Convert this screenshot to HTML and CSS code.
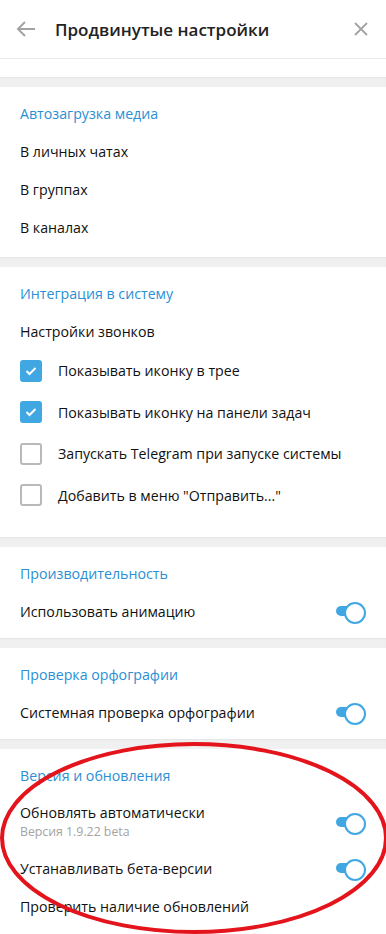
FILE: index.html
```html
<!DOCTYPE html>
<html lang="ru">
<head>
<meta charset="utf-8">
<link rel="stylesheet" href="styles.css">
</head>
<body>
<div class="page">
  <header class="header">
    <button class="icon-btn back" aria-label="Назад">
      <svg width="20" height="16" viewBox="0 0 20 16"><path d="M9 1 L2 8 L9 15 M2 8 H19" fill="none" stroke="#a3a3a3" stroke-width="2"/></svg>
    </button>
    <h1 class="title">Продвинутые настройки</h1>
    <button class="icon-btn close" aria-label="Закрыть">
      <svg width="14" height="14" viewBox="0 0 14 14"><path d="M1 1 L13 13 M13 1 L1 13" fill="none" stroke="#a3a3a3" stroke-width="1.8"/></svg>
    </button>
  </header>
  <div class="top-space"></div>
  <div class="divider"></div>

  <section class="section s-media">
    <div class="sec-title">Автозагрузка медиа</div>
    <div class="row">В личных чатах</div>
    <div class="row">В группах</div>
    <div class="row">В каналах</div>
  </section>
  <div class="divider"></div>

  <section class="section s-system">
    <div class="sec-title">Интеграция в систему</div>
    <div class="row">Настройки звонков</div>
    <div class="row check-row"><span class="checkbox on"><svg width="12" height="10" viewBox="0 0 12 10"><path d="M1.5 5 L4.5 8 L10.5 2" fill="none" stroke="#fff" stroke-width="2"/></svg></span>Показывать иконку в трее</div>
    <div class="row check-row"><span class="checkbox on"><svg width="12" height="10" viewBox="0 0 12 10"><path d="M1.5 5 L4.5 8 L10.5 2" fill="none" stroke="#fff" stroke-width="2"/></svg></span>Показывать иконку на панели задач</div>
    <div class="row check-row"><span class="checkbox"></span>Запускать Telegram при запуске системы</div>
    <div class="row check-row"><span class="checkbox"></span>Добавить в меню "Отправить..."</div>
  </section>
  <div class="divider"></div>

  <section class="section s-short">
    <div class="sec-title">Производительность</div>
    <div class="row toggle-row"><span>Использовать анимацию</span><span class="toggle"></span></div>
  </section>
  <div class="divider"></div>

  <section class="section s-short">
    <div class="sec-title">Проверка орфографии</div>
    <div class="row toggle-row"><span>Системная проверка орфографии</span><span class="toggle"></span></div>
  </section>
  <div class="divider"></div>

  <section class="section s-version">
    <div class="sec-title">Версия и обновления</div>
    <div class="row toggle-row two-line">
      <span class="stack"><span>Обновлять автоматически</span><span class="sub">Версия 1.9.22 beta</span></span>
      <span class="toggle"></span>
    </div>
    <div class="row toggle-row"><span>Устанавливать бета-версии</span><span class="toggle"></span></div>
    <div class="row">Проверить наличие обновлений</div>
  </section>

  <svg class="annotation" width="386" height="200" viewBox="0 0 386 200">
    <ellipse cx="194" cy="100" rx="192" ry="94" fill="none" stroke="#e3141c" stroke-width="4"/>
  </svg>
</div>
</body>
</html>
```

FILE: styles.css
```css
* { box-sizing: border-box; }
html, body { margin: 0; padding: 0; background: #fff; }
body {
  font-family: "Open Sans", "Noto Sans", sans-serif;
  font-size: 14.2px;
  color: #111;
}
.page { position: relative; width: 386px; height: 934px; overflow: hidden; }
.header {
  height: 59px;
  display: flex;
  align-items: center;
  border-bottom: 1px solid #e8e8e8;
}
.icon-btn {
  border: 0; background: none; padding: 0;
  display: flex; align-items: center; justify-content: center;
}
.back { width: 20px; margin-left: 16px; }
.title {
  margin: 0 0 0 19px;
  font-size: 17px;
  font-weight: 600;
  color: #222;
  flex: 1;
}
.close { width: 14px; margin-right: 18px; }
.top-space { height: 18px; }
.divider {
  height: 10px;
  background: #f0f0f0;
  box-shadow: inset 0 2px 2px -1px #e4e4e4;
}
.section { padding-top: 7px; }
.s-media { padding-bottom: 11px; }
.s-system { padding-bottom: 21px; }
.s-short { padding-bottom: 8px; }
.sec-title {
  height: 38px;
  display: flex; align-items: center;
  padding-left: 20px;
  color: #2a8fd4;
  font-weight: 400;
}
.row {
  height: 38px;
  display: flex; align-items: center;
  padding-left: 20px;
  padding-right: 20px;
}
.check-row { height: 41.5px; }
.checkbox {
  width: 22px; height: 22px;
  border: 2px solid #b9b9b9;
  border-radius: 3px;
  margin-right: 16px;
  display: flex; align-items: center; justify-content: center;
  flex: none;
}
.checkbox.on { background: #40a7e3; border-color: #40a7e3; }
.toggle-row { justify-content: space-between; }
.toggle {
  position: relative;
  width: 30px; height: 18px;
  flex: none;
}
.toggle::before {
  content: "";
  position: absolute;
  left: 0; top: 4px;
  width: 24px; height: 10px;
  border-radius: 5px;
  background: #40a7e3;
}
.toggle::after {
  content: "";
  position: absolute;
  right: 0; top: 0;
  width: 18px; height: 18px;
  border-radius: 50%;
  background: #fff;
  border: 2px solid #40a7e3;
}
.two-line { height: 55px; }
.stack { display: flex; flex-direction: column; gap: 1px; }
.sub { color: #a3a3a3; font-size: 12.3px; }
.annotation { position: absolute; left: 0; top: 738px; pointer-events: none; }
```
